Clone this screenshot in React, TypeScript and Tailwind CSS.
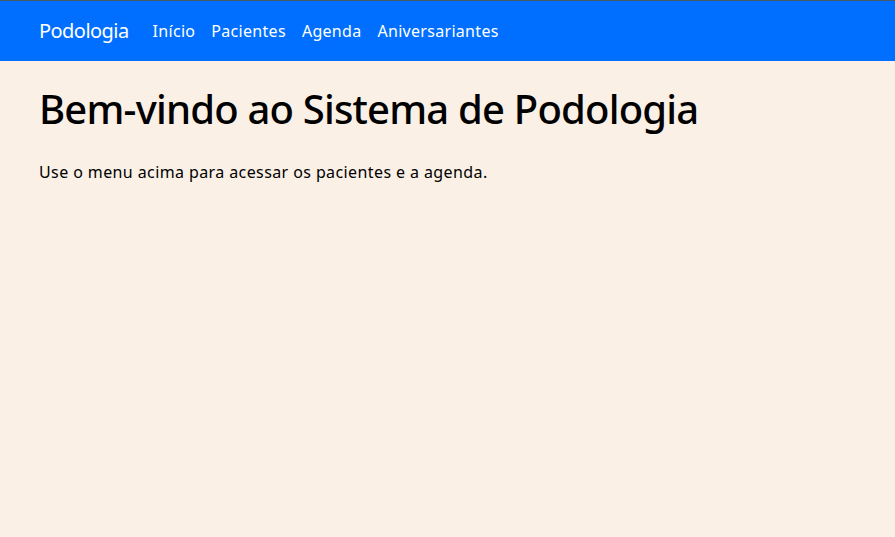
import React from "react";

export default function App() {
  const links = ["Início", "Pacientes", "Agenda", "Aniversariantes"];
  return (
    <div
      className="min-h-[537px] bg-[#faf0e6] text-black"
      style={{ fontFamily: '"Noto Sans", "Open Sans", sans-serif' }}
    >
      <nav className="h-[61px] border-t border-[#4b5966] bg-[#006fff] flex items-center px-[39px]">
        <span className="text-[20px] text-white mr-[16px] leading-[30px] tracking-[-0.55px]">Podologia</span>
        <ul className="flex items-center">
          {links.map((l) => (
            <li key={l} className="px-[8px] text-[16px] text-white leading-[24px] tracking-[0.3px]">
              {l}
            </li>
          ))}
        </ul>
      </nav>
      <main className="px-[39px] pt-[24px]">
        <h1 className="text-[40px] leading-[48px] font-medium tracking-[-0.8px] mb-[27px]">
          Bem-vindo ao Sistema de Podologia
        </h1>
        <p className="text-[16px] leading-[24px] tracking-[0.4px]">
          Use o menu acima para acessar os pacientes e a agenda.
        </p>
      </main>
    </div>
  );
}
